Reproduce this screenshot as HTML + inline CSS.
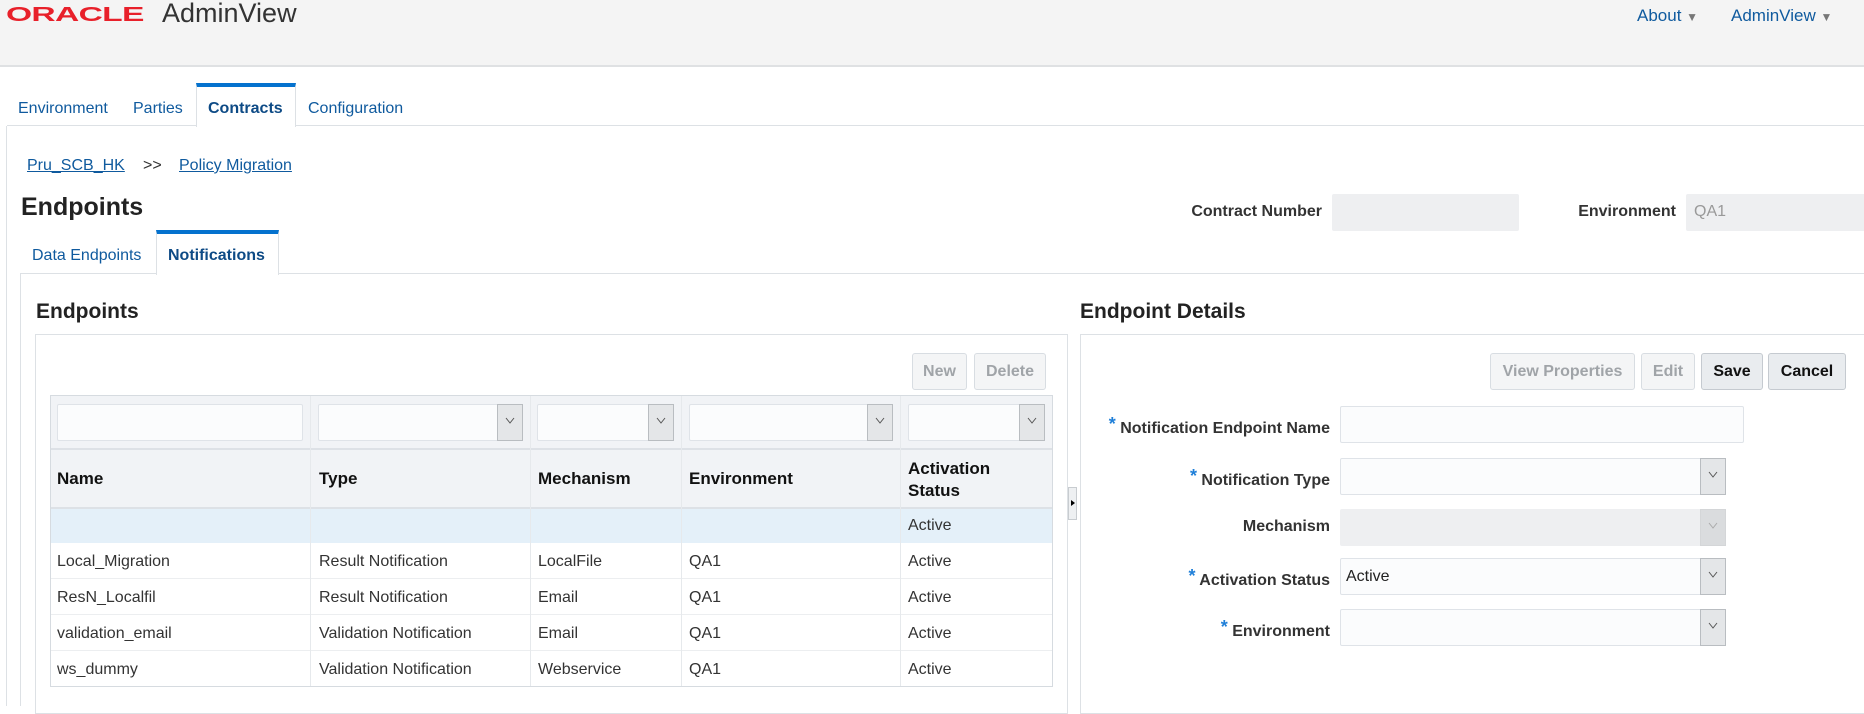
<!DOCTYPE html>
<html><head><meta charset="utf-8"><style>
*{box-sizing:border-box;margin:0;padding:0}
body{width:1864px;height:706px;overflow:hidden;background:#fff;font-family:"Liberation Sans",Arial,sans-serif;font-size:16px;color:#333;position:relative}
.a{position:absolute;white-space:nowrap}
.lnk{color:#0f5a9e}
.btn{position:absolute;height:37px;border:1px solid #d8dde2;border-radius:3px;background:#f4f5f6;color:#a0a4a8;font-weight:bold;font-size:16px;text-align:center;line-height:35px}
.btn.on{color:#111;background:#e9ecef;border-color:#c5cad0}
.inp{position:absolute;border:1px solid #dfe3e8;border-radius:2px;background:#fbfcfd}
.dd{position:absolute;top:-1px;right:-1px;bottom:-1px;width:26px;background:#e4e6e8;border:1px solid #b9bdc1;text-align:center}
.dd svg{margin-top:12px}
.hl{position:absolute;height:1px;background:#dfe3e8}
.vl{position:absolute;width:1px;background:#e6e9ec}
.lbl{position:absolute;font-weight:bold;color:#333;text-align:right;white-space:nowrap}
.st{color:#1f7fd8;font-size:18px;vertical-align:3px}
</style></head><body>
<div class="a" style="left:0;top:0;width:1864px;height:67px;background:#f4f4f4;border-bottom:2px solid #dfe1e3"></div>
<div class="a" style="left:6px;top:3px;font-size:24px;font-weight:bold;color:#e8202a;letter-spacing:-0.5px;transform:scaleX(1.4) scaleY(0.85);transform-origin:left top">ORACLE</div>
<div class="a" style="left:162px;top:-2px;font-size:27px;color:#333">AdminView</div>
<div class="a lnk" style="left:1637px;top:6px;font-size:17px">About <span style="color:#777;font-size:12px">▼</span></div>
<div class="a lnk" style="left:1731px;top:6px;font-size:17px">AdminView <span style="color:#777;font-size:12px">▼</span></div>

<div class="hl" style="left:7px;top:125px;width:1857px;background:#dde1e5"></div>
<div class="a" style="left:196px;top:83px;width:100px;height:44px;background:#fff;border:1px solid #dde1e5;border-bottom:none;border-top:4px solid #0572ce"></div>
<div class="a lnk" style="left:18px;top:100px">Environment</div>
<div class="a lnk" style="left:133px;top:100px">Parties</div>
<div class="a" style="left:208px;top:100px;font-weight:bold;color:#0d4a85">Contracts</div>
<div class="a lnk" style="left:308px;top:100px">Configuration</div>
<div class="vl" style="left:6px;top:126px;height:580px;background:#dde1e5"></div>

<div class="a lnk" style="left:27px;top:157px;text-decoration:underline">Pru_SCB_HK</div>
<div class="a" style="left:143px;top:157px;color:#333">&gt;&gt;</div>
<div class="a lnk" style="left:179px;top:157px;text-decoration:underline">Policy Migration</div>
<div class="a" style="left:21px;top:193px;font-size:25px;font-weight:bold;color:#222">Endpoints</div>

<div class="lbl" style="left:1180px;width:142px;top:203px">Contract Number</div>
<div class="a" style="left:1332px;top:194px;width:187px;height:37px;background:#eeeff1;border-radius:2px"></div>
<div class="lbl" style="left:1560px;width:116px;top:203px">Environment</div>
<div class="a" style="left:1686px;top:194px;width:180px;height:37px;background:#eeeff1;border-radius:2px;color:#999;padding:9px 8px">QA1</div>

<div class="hl" style="left:20px;top:273px;width:1844px;background:#dde1e5"></div>
<div class="a" style="left:156px;top:230px;width:123px;height:45px;background:#fff;border:1px solid #dde1e5;border-bottom:none;border-top:4px solid #0572ce"></div>
<div class="a lnk" style="left:32px;top:247px">Data Endpoints</div>
<div class="a" style="left:168px;top:247px;font-weight:bold;color:#0d4a85">Notifications</div>
<div class="vl" style="left:20px;top:274px;height:432px;background:#dde1e5"></div>

<div class="a" style="left:36px;top:300px;font-size:21px;font-weight:bold;color:#222">Endpoints</div>
<div class="a" style="left:1080px;top:300px;font-size:21px;font-weight:bold;color:#222">Endpoint Details</div>
<div class="a" style="left:35px;top:334px;width:1033px;height:380px;border:1px solid #dde1e5"></div>
<div class="a" style="left:1080px;top:334px;width:790px;height:380px;border:1px solid #dde1e5"></div>
<div class="a" style="left:1068px;top:487px;width:9px;height:33px;background:#eef0f2;border:1px solid #c8ccd0"><div style="position:absolute;left:2px;top:12px;border-left:4px solid #000;border-top:3px solid transparent;border-bottom:3px solid transparent"></div></div>

<div class="btn" style="left:912px;top:353px;width:55px">New</div>
<div class="btn" style="left:974px;top:353px;width:72px">Delete</div>

<div class="a" style="left:50px;top:395px;width:1003px;height:292px;border:1px solid #d6dbe0;background:#fff"></div>
<div class="a" style="left:51px;top:396px;width:1001px;height:112px;background:#f1f3f6"></div>
<div class="hl" style="left:51px;top:448px;width:1001px;background:#dde1e6;height:2px"></div>
<div class="hl" style="left:51px;top:507px;width:1001px;background:#dde1e6;height:2px"></div>
<div class="a" style="left:51px;top:509px;width:1001px;height:34px;background:#e4f0f9"></div>
<div class="hl" style="left:51px;top:578px;width:1001px;background:#eceef0"></div>
<div class="hl" style="left:51px;top:614px;width:1001px;background:#eceef0"></div>
<div class="hl" style="left:51px;top:650px;width:1001px;background:#eceef0"></div>
<div class="vl" style="left:310px;top:396px;height:290px"></div>
<div class="vl" style="left:530px;top:396px;height:290px"></div>
<div class="vl" style="left:681px;top:396px;height:290px"></div>
<div class="vl" style="left:900px;top:396px;height:290px"></div>

<div class="inp" style="left:57px;top:404px;width:246px;height:37px"></div>
<div class="inp" style="left:318px;top:404px;width:205px;height:37px"><div class="dd"><svg width="10" height="8"><path d="M1 1L5 6L9 1" fill="none" stroke="#555"/></svg></div></div>
<div class="inp" style="left:537px;top:404px;width:137px;height:37px"><div class="dd"><svg width="10" height="8"><path d="M1 1L5 6L9 1" fill="none" stroke="#555"/></svg></div></div>
<div class="inp" style="left:689px;top:404px;width:204px;height:37px"><div class="dd"><svg width="10" height="8"><path d="M1 1L5 6L9 1" fill="none" stroke="#555"/></svg></div></div>
<div class="inp" style="left:908px;top:404px;width:137px;height:37px"><div class="dd"><svg width="10" height="8"><path d="M1 1L5 6L9 1" fill="none" stroke="#555"/></svg></div></div>

<div class="a" style="left:57px;top:469px;font-weight:bold;color:#111;font-size:17px">Name</div>
<div class="a" style="left:319px;top:469px;font-weight:bold;color:#111;font-size:17px">Type</div>
<div class="a" style="left:538px;top:469px;font-weight:bold;color:#111;font-size:17px">Mechanism</div>
<div class="a" style="left:689px;top:469px;font-weight:bold;color:#111;font-size:17px">Environment</div>
<div class="a" style="left:908px;top:458px;font-weight:bold;color:#111;font-size:17px;line-height:22px">Activation<br>Status</div>

<div class="a" style="left:908px;top:517px">Active</div>
<div class="a" style="left:57px;top:553px">Local_Migration</div><div class="a" style="left:319px;top:553px">Result Notification</div><div class="a" style="left:538px;top:553px">LocalFile</div><div class="a" style="left:689px;top:553px">QA1</div><div class="a" style="left:908px;top:553px">Active</div>
<div class="a" style="left:57px;top:589px">ResN_Localfil</div><div class="a" style="left:319px;top:589px">Result Notification</div><div class="a" style="left:538px;top:589px">Email</div><div class="a" style="left:689px;top:589px">QA1</div><div class="a" style="left:908px;top:589px">Active</div>
<div class="a" style="left:57px;top:625px">validation_email</div><div class="a" style="left:319px;top:625px">Validation Notification</div><div class="a" style="left:538px;top:625px">Email</div><div class="a" style="left:689px;top:625px">QA1</div><div class="a" style="left:908px;top:625px">Active</div>
<div class="a" style="left:57px;top:661px">ws_dummy</div><div class="a" style="left:319px;top:661px">Validation Notification</div><div class="a" style="left:538px;top:661px">Webservice</div><div class="a" style="left:689px;top:661px">QA1</div><div class="a" style="left:908px;top:661px">Active</div>

<div class="btn" style="left:1490px;top:353px;width:145px">View Properties</div>
<div class="btn" style="left:1641px;top:353px;width:54px">Edit</div>
<div class="btn on" style="left:1701px;top:353px;width:62px">Save</div>
<div class="btn on" style="left:1768px;top:353px;width:78px">Cancel</div>

<div class="lbl" style="left:1080px;width:250px;top:414px"><span class="st">*</span> Notification Endpoint Name</div>
<div class="inp" style="left:1340px;top:406px;width:404px;height:37px"></div>
<div class="lbl" style="left:1080px;width:250px;top:466px"><span class="st">*</span> Notification Type</div>
<div class="inp" style="left:1340px;top:458px;width:386px;height:37px"><div class="dd"><svg width="10" height="8"><path d="M1 1L5 6L9 1" fill="none" stroke="#555"/></svg></div></div>
<div class="lbl" style="left:1080px;width:250px;top:518px">Mechanism</div>
<div class="inp" style="left:1340px;top:509px;width:386px;height:37px;background:#eeeff1;border-color:#eeeff1"><div class="dd" style="background:#dadcde;border-color:#d4d6d8"><svg width="10" height="8"><path d="M1 1L5 6L9 1" fill="none" stroke="#aaa"/></svg></div></div>
<div class="lbl" style="left:1080px;width:250px;top:566px"><span class="st">*</span> Activation Status</div>
<div class="inp" style="left:1340px;top:558px;width:386px;height:37px;padding:9px 5px;color:#222">Active<div class="dd"><svg width="10" height="8"><path d="M1 1L5 6L9 1" fill="none" stroke="#555"/></svg></div></div>
<div class="lbl" style="left:1080px;width:250px;top:617px"><span class="st">*</span> Environment</div>
<div class="inp" style="left:1340px;top:609px;width:386px;height:37px"><div class="dd"><svg width="10" height="8"><path d="M1 1L5 6L9 1" fill="none" stroke="#555"/></svg></div></div>
</body></html>
